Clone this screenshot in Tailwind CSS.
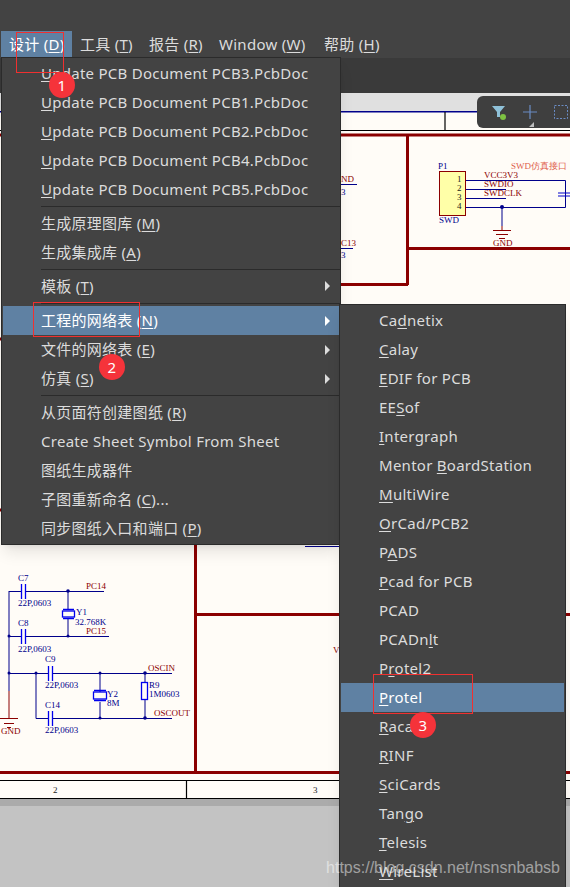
<!DOCTYPE html>
<html lang="zh">
<head>
    <meta charset="UTF-8">
    <title>设计菜单</title>
    <script src="https://cdn.jsdelivr.net/npm/@tailwindcss/browser@4"></script>
</head>
<body class="bg-[#c3c3c3]">
<div class="relative w-[570px] h-[887px] overflow-hidden font-['Noto_Sans','Noto_Sans_CJK_SC',sans-serif] text-[15px] tracking-[0.27px] text-[#dcdcdc] [&_u]:underline-offset-[2px]">

    <!-- Schematic sheet -->
    <svg class="absolute left-0 top-0" width="570" height="887" viewBox="0 0 570 887" font-family="Liberation Serif, serif" font-size="9" letter-spacing="0">
        <rect x="0" y="93" width="570" height="19" fill="#e0e0e0"/>
        <rect x="0" y="112" width="570" height="686" fill="#fffcf7"/>
        <rect x="0" y="798" width="570" height="8" fill="#8f8f8f" opacity="0.45"/>
        <rect x="0" y="111" width="570" height="1.5" fill="#00008b"/>
        <path d="M445 112V130M0 130.500H570M0 780.500H570M0 798.500H570M186.500 780V798" stroke="#000" stroke-width="1.200" fill="none"/>
        <path d="M0 135H570M407.500 135V285M340 284.500H408M408 248.500H570M195.500 545V772M195 614.500H570M0 772.500H570" stroke="#8b0000" stroke-width="3" fill="none"/>
        <path d="M0 339H6M0 510H6" stroke="#8b0000" stroke-width="3"/>
        <path d="M305 546.500H340" stroke="#00008b"/>

        <!-- P1 SWD -->
        <rect x="439.500" y="171.500" width="26" height="44" fill="#ffffa8" stroke="#8b0000"/>
        <path d="M466 180.500H565.500V207.500H466M466 189.500H506M466 198.500H506M502 207V226" stroke="#00008b" fill="none"/>
        <path d="M558 193H570M558 196H570" stroke="#0000cc"/>
        <circle cx="502" cy="207" r="2" fill="#00008b"/>
        <path d="M502 226V230M493 230.500H511M496 234.500H508M499 238.500H505" stroke="#8b0000" fill="none"/>
        <g fill="#222">
            <text x="457" y="182">1</text><text x="457" y="191">2</text><text x="457" y="200">3</text><text x="457" y="209">4</text>
        </g>
        <g fill="#00008b">
            <text x="438" y="169">P1</text>
            <text x="439" y="223">SWD</text>
            <text x="341" y="195">3</text>
            <text x="341" y="258">3</text>
        </g>
        <g fill="#8b0000">
            <text x="484" y="178">VCC3V3</text>
            <text x="484" y="187">SWDIO</text>
            <text x="484" y="196">SWDCLK</text>
            <text x="493" y="246">GND</text>
            <text x="341" y="182">ND</text>
            <text x="341" y="246">C13</text>
            <text x="333" y="653">V</text>
        </g>
        <text x="511" y="169" fill="#e0604c">SWD仿真接口</text>
        <path d="M340 184.500H357M340 248.500H353" stroke="#00008b"/>

        <!-- Crystal section -->
        <g stroke="#00008b" fill="none">
            <path d="M9 591V691M9 591.500H21M26 591.500H104M9 636.500H21M26 636.500H109M9 673.500H48M53 673.500H172M36 673V718.500H48M53 718.500H172"/>
            <path d="M68 591V609M68 619V636M100 673V692M100 702V718M145 673V682M145 700V718"/>
        </g>
        <g stroke="#0000ee" fill="none" stroke-width="1.300">
            <path d="M21.500 584V599M25.500 584V599M21.500 629V644M25.500 629V644M48.500 666V681M52.500 666V681M48.500 711V726M52.500 711V726"/>
            <rect x="62.500" y="611" width="12" height="6"/>
            <path d="M63 609.500H74M63 618.500H74"/>
            <rect x="93.500" y="692" width="13" height="7"/>
            <path d="M94 690.500H106M94 700.500H106"/>
            <rect x="141.500" y="682.500" width="6" height="17"/>
        </g>
        <g fill="#00008b">
            <circle cx="68" cy="591" r="1.800"/><circle cx="68" cy="636" r="1.500"/><circle cx="9" cy="636" r="1.500"/>
            <circle cx="9" cy="673" r="1.500"/><circle cx="36" cy="673" r="1.500"/><circle cx="100" cy="673" r="1.500"/>
            <circle cx="145" cy="673" r="1.800"/><circle cx="100" cy="718" r="1.500"/><circle cx="145" cy="718" r="1.800"/>
        </g>
        <path d="M9 691V718M0 718.500H18M4 723.500H14M7 727.500H11" stroke="#8b0000" fill="none"/>
        <g fill="#00008b">
            <text x="18" y="581">C7</text><text x="18" y="606">22P,0603</text>
            <text x="18" y="626">C8</text><text x="18" y="652">22P,0603</text>
            <text x="45" y="662">C9</text><text x="45" y="688">22P,0603</text>
            <text x="45" y="708">C14</text><text x="45" y="733">22P,0603</text>
            <text x="76" y="615">Y1</text><text x="75" y="625">32.768K</text>
            <text x="107" y="697">Y2</text><text x="107" y="706">8M</text>
            <text x="149" y="688">R9</text><text x="149" y="697">1M0603</text>
        </g>
        <g fill="#8b0000">
            <text x="86" y="589">PC14</text>
            <text x="86" y="634">PC15</text>
            <text x="148" y="671">OSCIN</text>
            <text x="154" y="716">OSCOUT</text>
            <text x="1" y="734">GND</text>
        </g>
        <g fill="#222">
            <text x="53" y="793">2</text>
            <text x="313" y="793">3</text>
        </g>
    </svg>

    <!-- Title bar and menu bar -->
    <div class="relative h-[58px] bg-[#434343] pt-[31px]">
        <nav class="flex h-[27px] pl-px leading-[27px]">
            <span class="w-[71px] pl-2 bg-[#5f81a3] text-white">设计 (<u>D</u>)</span>
            <span class="ml-[8px] w-[69px]">工具 (<u>T</u>)</span>
            <span class="w-[70px]">报告 (<u>R</u>)</span>
            <span class="w-[105px]">Window (<u>W</u>)</span>
            <span>帮助 (<u>H</u>)</span>
        </nav>
    </div>
    <div class="relative h-[35px] bg-[#3a3a3a]"></div>

    <!-- Floating filter toolbar -->
    <div class="absolute left-[477px] top-[96px] w-[100px] h-[32px] rounded-md bg-[#3f3f3f] flex items-center gap-[16px] pl-[14px]">
        <svg width="16" height="16" viewBox="0 0 16 16">
            <path d="M1 2H14L9 8V13H6V8Z" fill="#8fc1d8"/>
            <circle cx="12" cy="13" r="3" fill="#7ec242"/>
        </svg>
        <svg width="14" height="14" viewBox="0 0 14 14">
            <path d="M7 0V14M0 7H14" stroke="#6a8cc4" stroke-width="1.200"/>
        </svg>
        <svg width="16" height="16" viewBox="0 0 16 16">
            <rect x="1.500" y="1.500" width="13" height="13" fill="none" stroke="#6a8cc4" stroke-dasharray="2 1.500"/>
        </svg>
        <div class="absolute left-[52px] top-[26px] border-b-[5px] border-l-[5px] border-b-[#bdbdbd] border-l-transparent"></div>
    </div>

    <!-- Main dropdown -->
    <div class="absolute left-px top-[57px] w-[340px] h-[488px] bg-[#434343] border border-[#2b2b2b] shadow-lg leading-[29px] pt-px">
        <div class="h-[29px] pl-[39px]"><u>U</u>pdate PCB Document PCB3.PcbDoc</div>
        <div class="h-[29px] pl-[39px]"><u>U</u>pdate PCB Document PCB1.PcbDoc</div>
        <div class="h-[29px] pl-[39px]"><u>U</u>pdate PCB Document PCB2.PcbDoc</div>
        <div class="h-[29px] pl-[39px]"><u>U</u>pdate PCB Document PCB4.PcbDoc</div>
        <div class="h-[29px] pl-[39px]"><u>U</u>pdate PCB Document PCB5.PcbDoc</div>
        <div class="ml-[39px] mt-[2px] mb-[2px] h-px bg-[#2b2b2b]"></div>
        <div class="h-[29px] pl-[39px]">生成原理图库 (<u>M</u>)</div>
        <div class="h-[29px] pl-[39px]">生成集成库 (<u>A</u>)</div>
        <div class="ml-[39px] mt-[2px] mb-px h-px bg-[#2b2b2b]"></div>
        <div class="flex items-center justify-between h-[30px] pl-[39px] pr-[10px]">
            <span>模板 (<u>T</u>)</span>
            <span class="border-y-[5px] border-l-[5px] border-y-transparent border-l-[#dcdcdc]"></span>
        </div>
        <div class="h-px mt-[2px] mb-[2px] ml-[39px] bg-[#2b2b2b]"></div>
        <div class="flex items-center justify-between h-[29px] pl-[39px] pr-[10px] ml-px bg-[#5f81a3] text-white">
            <span class="-ml-px">工程的网络表 (<u>N</u>)</span>
            <span class="border-y-[5px] border-l-[5px] border-y-transparent border-l-white"></span>
        </div>
        <div class="flex items-center justify-between h-[29px] pl-[39px] pr-[10px]">
            <span>文件的网络表 (<u>E</u>)</span>
            <span class="border-y-[5px] border-l-[5px] border-y-transparent border-l-[#dcdcdc]"></span>
        </div>
        <div class="flex items-center justify-between h-[29px] pl-[39px] pr-[10px]">
            <span>仿真 (<u>S</u>)</span>
            <span class="border-y-[5px] border-l-[5px] border-y-transparent border-l-[#dcdcdc]"></span>
        </div>
        <div class="ml-[39px] mt-[2px] mb-[2px] h-px bg-[#2b2b2b]"></div>
        <div class="h-[29px] pl-[39px]">从页面符创建图纸 (<u>R</u>)</div>
        <div class="h-[29px] pl-[39px]">Create Sheet Symbol From Sheet</div>
        <div class="h-[29px] pl-[39px]">图纸生成器件</div>
        <div class="h-[29px] pl-[39px]">子图重新命名 (<u>C</u>)...</div>
        <div class="h-[29px] pl-[39px]">同步图纸入口和端口 (<u>P</u>)</div>
    </div>

    <!-- Netlist submenu -->
    <div class="absolute left-[339px] top-[304px] w-[227px] h-[600px] bg-[#434343] border border-[#2b2b2b] shadow-lg leading-[29px] pt-px">
        <div class="h-[29px] pl-[39px]">Ca<u>d</u>netix</div>
        <div class="h-[29px] pl-[39px]"><u>C</u>alay</div>
        <div class="h-[29px] pl-[39px]"><u>E</u>DIF for PCB</div>
        <div class="h-[29px] pl-[39px]">EE<u>S</u>of</div>
        <div class="h-[29px] pl-[39px]"><u>I</u>ntergraph</div>
        <div class="h-[29px] pl-[39px]">Mentor <u>B</u>oardStation</div>
        <div class="h-[29px] pl-[39px]"><u>M</u>ultiWire</div>
        <div class="h-[29px] pl-[39px]"><u>O</u>rCad/PCB2</div>
        <div class="h-[29px] pl-[39px]">P<u>A</u>DS</div>
        <div class="h-[29px] pl-[39px]"><u>P</u>cad for PCB</div>
        <div class="h-[29px] pl-[39px]">PCAD</div>
        <div class="h-[29px] pl-[39px]">PCADn<u>l</u>t</div>
        <div class="h-[29px] pl-[39px]">P<u>r</u>otel2</div>
        <div class="h-[29px] pl-[39px] ml-px mr-px bg-[#5f81a3] text-white"><span class="-ml-px"><u>P</u>rotel</span></div>
        <div class="h-[29px] pl-[39px]"><u>R</u>acal</div>
        <div class="h-[29px] pl-[39px]"><u>R</u>INF</div>
        <div class="h-[29px] pl-[39px]"><u>S</u>ciCards</div>
        <div class="h-[29px] pl-[39px]">Tan<u>g</u>o</div>
        <div class="h-[29px] pl-[39px]"><u>T</u>elesis</div>
        <div class="h-[29px] pl-[39px]"><u>W</u>ireList</div>
    </div>

    <!-- Annotation marks -->
    <div class="absolute left-[16px] top-[32px] w-[48px] h-[41px] border border-[#f03030]"></div>
    <div class="absolute left-[33px] top-[302px] w-[107px] h-[35px] border border-[#f03030]"></div>
    <div class="absolute left-[373px] top-[674px] w-[100px] h-[40px] border border-[#f03030]"></div>
    <div class="absolute left-[49px] top-[72px] w-[26px] h-[26px] rounded-full bg-[#f5333a] text-white text-center leading-[26px]">1</div>
    <div class="absolute left-[99px] top-[354px] w-[26px] h-[26px] rounded-full bg-[#f5333a] text-white text-center leading-[26px]">2</div>
    <div class="absolute left-[410px] top-[712px] w-[26px] h-[26px] rounded-full bg-[#f5333a] text-white text-center leading-[26px]">3</div>

    <!-- Watermark -->
    <div class="absolute right-[10px] top-[858px] text-[16px] leading-[20px] tracking-normal text-white/50 font-['Liberation_Sans',sans-serif]">https://blog.csdn.net/nsnsnbabsb</div>
</div>
</body>
</html>
